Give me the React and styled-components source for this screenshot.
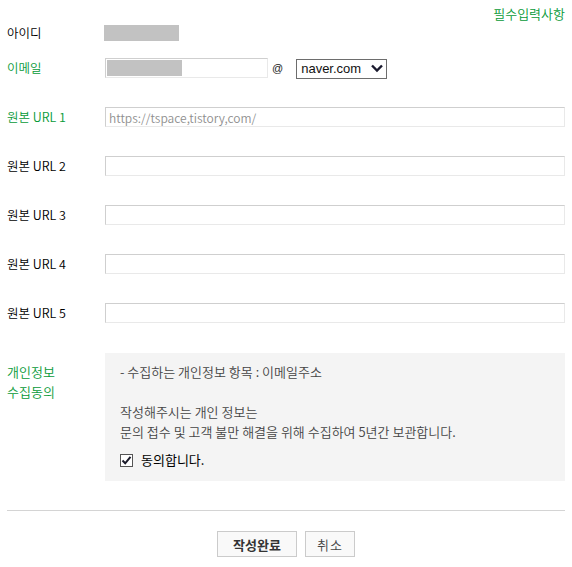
import React from "react";
import styled, { createGlobalStyle } from "styled-components";

const Global = createGlobalStyle`
  html, body { margin: 0; padding: 0; background: #fff; }
  body {
    font-family: "Noto Sans CJK KR", "Noto Sans", "Liberation Sans", sans-serif;
    font-size: 13px;
    font-weight: 350;
    color: #111;
  }
`;

const GREEN = "#079a38";

const Page = styled.form`
  width: 572px;
  padding: 0 7px;
  box-sizing: border-box;
  display: flex;
  flex-direction: column;
`;

const Required = styled.div`
  margin-top: 5px;
  height: 18px;
  line-height: 18px;
  text-align: right;
  color: ${GREEN};
`;

const Row = styled.div`
  display: grid;
  grid-template-columns: 98px 1fr;
  align-items: center;
  height: ${(p) => p.$h || 20}px;
  margin-top: ${(p) => p.$top || 0}px;
`;

const Label = styled.div`
  color: ${(p) => (p.$req ? GREEN : "#000")};
  line-height: 20px;
  font-size: 12.5px;
`;

const Masked = styled.div`
  width: ${(p) => p.$w}px;
  height: ${(p) => p.$hh}px;
  background: #c2c2c2;
  margin-left: ${(p) => p.$ml || 0}px;
`;

const Field = styled.div`
  display: flex;
  align-items: center;
`;

const InputBox = styled.div`
  box-sizing: border-box;
  width: ${(p) => (p.$w ? `${p.$w}px` : "100%")};
  height: 20px;
  border: 1px solid;
  border-color: #cfcfcf #e9e9e9 #e9e9e9 #cfcfcf;
  background: #fff;
  display: flex;
  align-items: center;
  padding: 0 1px;
`;

const TextInput = styled.input`
  box-sizing: border-box;
  width: 100%;
  height: 20px;
  border: 1px solid;
  border-color: #cfcfcf #e9e9e9 #e9e9e9 #cfcfcf;
  background: #fff;
  padding: 0 3px;
  margin: 0;
  font-family: inherit;
  font-size: 12px;
  font-weight: 350;
  color: #333;
  outline: none;
  &::placeholder { color: #8f8f8f; }
`;

const At = styled.span`
  margin: 0 13px 0 4px;
  color: #222;
  font-family: "Liberation Sans", sans-serif;
  font-size: 11px;
  font-weight: 400;
`;

const SelectWrap = styled.div`
  position: relative;
  width: 91px;
  height: 20px;
`;

const Select = styled.select`
  appearance: none;
  -webkit-appearance: none;
  box-sizing: border-box;
  width: 100%;
  height: 100%;
  border: 1px solid #6d6d6d;
  border-radius: 0;
  background: #fff;
  margin: 0;
  padding: 0 0 0 4px;
  font-family: "Liberation Sans", sans-serif;
  font-size: 13px;
  color: #111;
  outline: none;
`;

const Chevron = styled.svg`
  position: absolute;
  right: 4px;
  top: 6px;
  pointer-events: none;
`;

const AgreeRow = styled.div`
  display: grid;
  grid-template-columns: 98px 1fr;
  margin-top: 30px;
`;

const AgreeLabel = styled.div`
  color: ${GREEN};
  line-height: 20px;
  padding-top: 9px;
`;

const AgreeBox = styled.div`
  background: #f4f4f4;
  height: 128px;
  box-sizing: border-box;
  padding: 9px 15px 0;
  color: #444;
  line-height: 20px;
`;

const Line = styled.div`
  height: 20px;
`;

const CheckLine = styled.label`
  display: flex;
  align-items: center;
  height: 20px;
  margin-top: 8px;
  color: #000;
  font-weight: 400;
  gap: 8px;
`;

const CheckBox = styled.span`
  width: 13px;
  height: 13px;
  box-sizing: border-box;
  border: 1px solid #555;
  background: #fff;
  display: inline-flex;
  align-items: center;
  justify-content: center;
`;

const Divider = styled.hr`
  margin: 29px 0 0;
  border: 0;
  border-top: 1px solid #d4d4d4;
  height: 0;
`;

const Buttons = styled.div`
  display: flex;
  justify-content: center;
  gap: 8px;
  margin-top: 20px;
`;

const Btn = styled.button`
  box-sizing: border-box;
  width: ${(p) => p.$w}px;
  height: 26px;
  border: 1px solid #cbcbcb;
  background: #f9f9f9;
  font-family: inherit;
  font-size: 13px;
  font-weight: ${(p) => (p.$bold ? 700 : 350)};
  color: ${(p) => (p.$bold ? "#333" : "#444")};
  letter-spacing: ${(p) => (p.$bold ? "0" : "1px")};
  padding: 0;
  margin: 0;
`;

const urls = [2, 3, 4, 5];

export default function App() {
  return (
    <>
      <Global />
      <Page onSubmit={(e) => e.preventDefault()}>
        <Required>필수입력사항</Required>
        <Row $h={16}>
          <Label>아이디</Label>
          <Masked $w={75} $hh={16} $ml={-1} />
        </Row>
        <Row $top={19}>
          <Label $req>이메일</Label>
          <Field>
            <InputBox $w={163}>
              <Masked $w={75} $hh={16} />
            </InputBox>
            <At>@</At>
            <SelectWrap>
              <Select defaultValue="naver.com">
                <option>naver.com</option>
                <option>gmail.com</option>
                <option>daum.net</option>
              </Select>
              <Chevron width="12" height="9" viewBox="0 0 12 9">
                <path d="M1 1.5 L6 6.5 L11 1.5" fill="none" stroke="#1a1a2e" strokeWidth="2.4" />
              </Chevron>
            </SelectWrap>
          </Field>
        </Row>
        <Row $top={29}>
          <Label $req>원본 URL 1</Label>
          <TextInput placeholder="https://tspace,tistory,com/" />
        </Row>
        {urls.map((n) => (
          <Row key={n} $top={29}>
            <Label>원본 URL {n}</Label>
            <TextInput />
          </Row>
        ))}
        <AgreeRow>
          <AgreeLabel>
            개인정보
            <br />
            수집동의
          </AgreeLabel>
          <AgreeBox>
            <Line>- 수집하는 개인정보 항목 : 이메일주소</Line>
            <Line />
            <Line>작성해주시는 개인 정보는</Line>
            <Line>문의 접수 및 고객 불만 해결을 위해 수집하여 5년간 보관합니다.</Line>
            <CheckLine>
              <CheckBox>
                <svg width="11" height="11" viewBox="0 0 11 11">
                  <path d="M1.5 5.5 L4.2 8.3 L9.5 1.8" fill="none" stroke="#1b1b2a" strokeWidth="2" />
                </svg>
              </CheckBox>
              동의합니다.
            </CheckLine>
          </AgreeBox>
        </AgreeRow>
        <Divider />
        <Buttons>
          <Btn type="submit" $w={80} $bold>
            작성완료
          </Btn>
          <Btn type="button" $w={50}>
            취소
          </Btn>
        </Buttons>
      </Page>
    </>
  );
}
